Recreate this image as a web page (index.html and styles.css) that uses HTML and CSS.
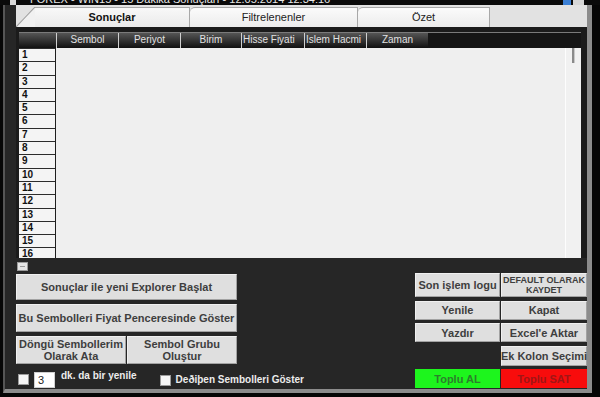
FILE: index.html
```html
<html>
	<head>
		<title>Tarama Sonuçları</title>
		<link rel="stylesheet" href="styles.css">
	</head>
	<body>
		<div class="titlebar">
			<span class="appIcon"></span>
			<span class="titleText">FOREX - WIN15 - 15 Dakika Sonuçları - 12.05.2014 12:34:16</span>
			<span class="ctl ctlBlue"></span>
			<span class="ctl"></span>
		</div>

		<div class="window">
			<div class="tabstrip">
				<div class="tabSlant"></div>
				<div class="tab active">Sonuçlar</div>
				<div class="tab">Filtrelenenler</div>
				<div class="tab last">Özet</div>
			</div>

			<div class="gridframe">
				<div class="gridhead">
					<div class="hcell corner"></div>
					<div class="hcell">Sembol</div>
					<div class="hcell">Periyot</div>
					<div class="hcell narrow">Birim</div>
					<div class="hcell wide left">Hisse Fiyati</div>
					<div class="hcell left">Islem Hacmi</div>
					<div class="hcell">Zaman</div>
				</div>
				<div class="gridbody">
					<div class="rowheads">
						<div class="rowhead">1</div>
						<div class="rowhead">2</div>
						<div class="rowhead">3</div>
						<div class="rowhead">4</div>
						<div class="rowhead">5</div>
						<div class="rowhead">6</div>
						<div class="rowhead">7</div>
						<div class="rowhead">8</div>
						<div class="rowhead">9</div>
						<div class="rowhead">10</div>
						<div class="rowhead">11</div>
						<div class="rowhead">12</div>
						<div class="rowhead">13</div>
						<div class="rowhead">14</div>
						<div class="rowhead">15</div>
						<div class="rowhead">16</div>
					</div>
					<div class="cells"></div>
					<div class="vscroll"><div class="thumb"></div></div>
				</div>
			</div>

			<div class="belowGrid"><div class="miniBtn"></div></div>

			<div class="actions">
				<div class="leftActions">
					<div class="btn big">Sonuçlar ile yeni Explorer Başlat</div>
					<div class="btn big tall">Bu Sembolleri Fiyat Penceresinde Göster</div>
					<div class="btnPair">
						<div class="btn">Döngü Sembollerim<br>Olarak Ata</div>
						<div class="btn">Sembol Grubu<br>Oluştur</div>
					</div>
					<div class="refreshRow">
						<span class="check first"></span>
						<span class="numBox">3</span>
						<span class="optText">dk. da bir yenile</span>
						<span class="check second"></span>
						<span class="optText lower">Deðiþen Sembolleri Göster</span>
					</div>
				</div>

				<div class="rightActions">
					<div class="btn">Son işlem logu</div>
					<div class="btn small">DEFAULT OLARAK<br>KAYDET</div>
					<div class="btn">Yenile</div>
					<div class="btn">Kapat</div>
					<div class="btn">Yazdır</div>
					<div class="btn">Excel'e Aktar</div>
					<div class="empty"></div>
					<div class="btn">Ek Kolon Seçimi</div>
					<div class="btn buy">Toplu AL</div>
					<div class="btn sell">Toplu SAT</div>
				</div>
			</div>
		</div>
	</body>
</html>
```

FILE: styles.css
```css
body {
	margin: 0;
	width: 600px;
	height: 397px;
	overflow: hidden;

	background: #060606;
	font-family: "Liberation Sans", Arial, sans-serif;
}

/* title bar, mostly scrolled off the top */
.titlebar {
	display: flex;
	align-items: flex-end;
	height: 5px;
	overflow: hidden;
	padding-left: 10px;

	background: #0a0a0a;
	color: #e8e8e8;
	font-size: 11px;
}

.titlebar .appIcon {
	flex: none;
	width: 6px;
	height: 10px;
	background: #d8d8d8;
}

.titlebar .titleText {
	margin-left: 14px;
	line-height: 12px;
	white-space: nowrap;
}

.titlebar .ctl {
	flex: none;
	width: 11px;
	height: 10px;
	margin-left: 2px;
	background: #d6d6d6;
}

.titlebar .ctl.ctlBlue {
	margin-left: auto;
	width: 8px;
	background: #3b7fd4;
}

.titlebar .ctl:last-child {
	margin-right: 16px;
}

.window {
	box-sizing: border-box;
	width: 589px;
	height: 388px;
	margin-left: 3px;
	padding-left: 11px;

	border-left: 2px solid #555;
	border-right: 5px solid #8c8c8c;
	border-bottom: 4px solid #8c8c8c;
	background: #262626;
}

/* tabs */
.tabstrip {
	display: flex;
	align-items: flex-end;
	height: 22px;
	padding-top: 2px;
	box-sizing: border-box;

	background: #e2e2e2;
	font-size: 11px;
}

.tabSlant {
	flex: none;
	width: 19px;
	height: 20px;
	background: linear-gradient(to top left, #f1f1f1 calc(50% - 1px), #9c9c9c 50%, transparent calc(50% + 1px));
}

.tab {
	flex: none;
	box-sizing: border-box;
	height: 20px;
	line-height: 19px;
	text-align: center;

	border: 1px solid #a8a8a8;
	border-bottom: none;
	border-left: none;
	border-top-left-radius: 5px;
	background: linear-gradient(#fbfbfb, #ececec);
	color: #222;
}

.tab.active {
	width: 155px;
	border-radius: 0;
	background: linear-gradient(#f8f8f8, #eaeaea);
	color: #111;
	font-weight: bold;
}

.tab:nth-child(3) { width: 168px; }
.tab.last { width: 132px; }

/* results grid */
.gridframe {
	padding: 5px 6px 0 3px;
	background: #1b1b1b;
}

.gridhead {
	display: flex;
	height: 16px;
	background: #151515;
	border-top: 1px solid #7a7a7a;
	box-sizing: border-box;
}

.hcell {
	flex: none;
	width: 61px;
	border-left: 1px solid #d0d0d0;
	background: linear-gradient(#555, #111);

	color: #e2e2e2;
	font-size: 10px;
	line-height: 14px;
	text-align: center;
	white-space: nowrap;
	overflow: hidden;
}

.hcell.corner {
	width: 37px;
	border-left: none;
}

.hcell.narrow { width: 60px; }
.hcell.wide { width: 62px; }
.hcell.left { text-align: left; padding-left: 1px; box-sizing: border-box; width: 63px; }
.hcell.left + .hcell.left { width: 62px; }

.gridbody {
	display: flex;
	height: 210px;
	overflow: hidden;
	background: #efefef;
}

.rowheads {
	flex: none;
	width: 36px;
	border-right: 1px solid #1e1e1e;
	background: #2a2a2a;
}

.rowhead {
	box-sizing: border-box;
	height: 13.3px;
	padding-left: 3px;
	border-top: 1.5px solid #2c2c2c;

	background: #f4f4f4;
	color: #111;
	font-size: 10px;
	font-weight: bold;
	line-height: 12px;
}

.cells {
	flex: 1;
	background: #efefef;
}

.vscroll {
	flex: none;
	width: 15px;
	border-left: 1px solid #fdfdfd;
	background: #f1f1f1;
}

.vscroll .thumb {
	width: 2px;
	height: 15px;
	margin-left: 6px;
	background: #8a8a8a;
	border-right: 1px solid #c8c8c8;
}

.belowGrid {
	height: 15px;
	padding-top: 4px;
	box-sizing: border-box;
}

.miniBtn {
	width: 11px;
	height: 9px;
	margin-left: 1px;
	box-sizing: border-box;
	border: 1px solid #9a9a9a;
	background: linear-gradient(#9a9a9a, #9a9a9a) center / 5px 1px no-repeat, #e4e4e4;
}

/* buttons */
.actions {
	display: flex;
	justify-content: space-between;
	height: 115px;
}

.btn {
	display: flex;
	align-items: center;
	justify-content: center;
	box-sizing: border-box;

	border: 1px solid #f0f0f0;
	border-right-color: #a2a2a2;
	border-bottom-color: #a2a2a2;
	background: #dfdfdf;

	color: #3e3e3e;
	font-size: 11px;
	font-weight: bold;
	line-height: 12px;
	text-align: center;
	white-space: nowrap;
}

.leftActions {
	display: flex;
	flex-direction: column;
	width: 221px;
	margin-top: 1px;
}

.leftActions .big { height: 26px; }
.leftActions .big.tall { height: 28px; margin-top: 4px; }

.btnPair {
	display: flex;
	justify-content: space-between;
	height: 28px;
	margin-top: 4px;
}

.btnPair .btn { width: 110px; }

.refreshRow {
	display: flex;
	align-items: flex-start;
	height: 18px;
	margin-top: 6px;
	margin-left: 2px;
	white-space: nowrap;
}

.refreshRow > span {
	flex: none;
}

.check {
	width: 11px;
	height: 11px;
	box-sizing: border-box;
	border: 1px solid #9c9c9c;
	background: #f6f6f6;
}

.check.first { margin-top: 4px; }
.check.second { margin-top: 5px; margin-left: 23px; }

.numBox {
	box-sizing: border-box;
	width: 21px;
	height: 16px;
	margin-top: 2px;
	margin-left: 5px;
	padding-left: 3px;

	background: #fff;
	border: 1px solid #d0d0d0;
	color: #222;
	font-size: 11px;
	line-height: 14px;
}

.optText {
	margin-left: 6px;
	color: #ececec;
	font-size: 10px;
	font-weight: bold;
	line-height: 12px;
}

.optText.lower {
	margin-left: 5px;
	margin-top: 4px;
}

.rightActions {
	display: grid;
	grid-template-columns: 85px 86px;
	grid-template-rows: 24px 19px 19px 20px 19px;
	column-gap: 1px;
	row-gap: 3.5px;
	width: 172px;
}

.rightActions .small {
	font-size: 9px;
	line-height: 10px;
}

.rightActions .buy {
	background: #1df51d;
	border-color: #1df51d;
	color: #2c7f2c;
}

.rightActions .sell {
	background: #f80c0c;
	border-color: #f80c0c;
	color: #a01616;
}
```
